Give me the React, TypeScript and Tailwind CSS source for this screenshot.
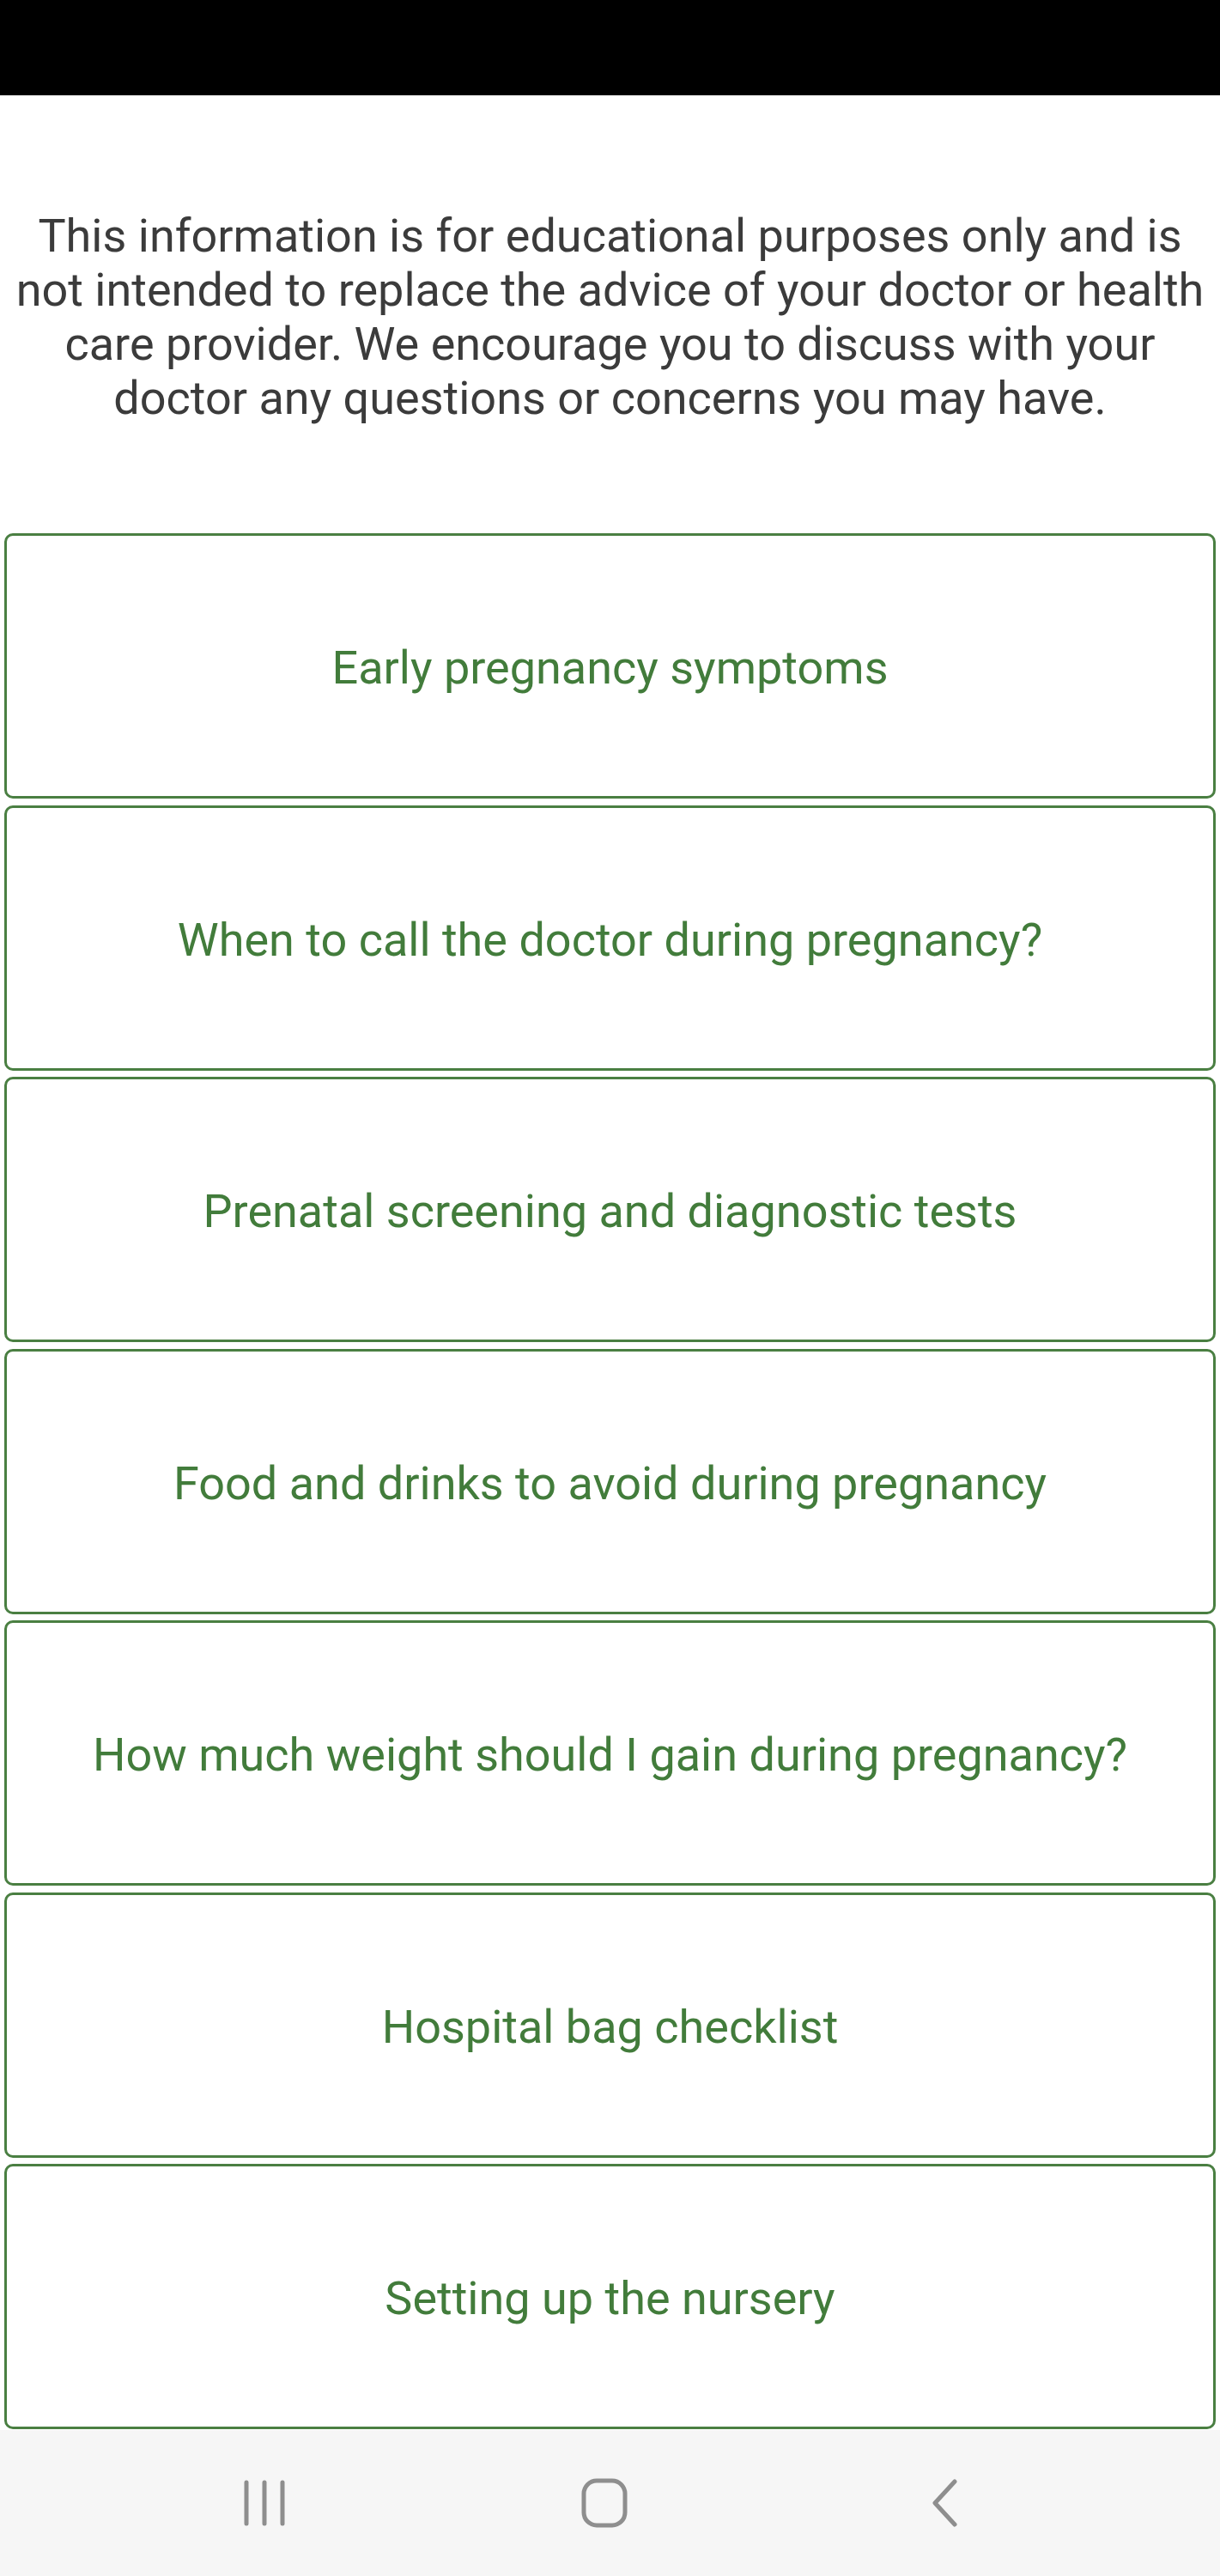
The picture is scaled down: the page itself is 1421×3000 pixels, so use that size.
import { FC } from "react";

const topics = [
  "Early pregnancy symptoms",
  "When to call the doctor during pregnancy?",
  "Prenatal screening and diagnostic tests",
  "Food and drinks to avoid during pregnancy",
  "How much weight should I gain during pregnancy?",
  "Hospital bag checklist",
  "Setting up the nursery",
];

const TopicCard: FC<{ title: string }> = ({ title }) => {
  return (
    <button className="flex h-[309px] w-full items-center justify-center rounded-[10px] border-[3px] border-[#4a7f42] bg-white">
      <span className="pt-[4px] text-[54px] text-[#427c3b]">{title}</span>
    </button>
  );
};

const NavBar: FC = () => {
  return (
    <div className="flex h-[170px] items-center bg-[#f6f6f6] pl-[110px]">
      {/* recent apps */}
      <div className="flex w-[396px] justify-center">
        <svg width="50" height="54" viewBox="0 0 50 54" className="text-[#8e8e8e]">
          <line x1="4" y1="3" x2="4" y2="51" stroke="currentColor" strokeWidth="5" strokeLinecap="round" />
          <line x1="25" y1="3" x2="25" y2="51" stroke="currentColor" strokeWidth="5" strokeLinecap="round" />
          <line x1="46" y1="3" x2="46" y2="51" stroke="currentColor" strokeWidth="5" strokeLinecap="round" />
        </svg>
      </div>
      {/* home */}
      <div className="flex w-[396px] justify-center">
        <svg width="54" height="58" viewBox="0 0 54 58" className="text-[#8e8e8e]">
          <rect x="3" y="3" width="48" height="52" rx="15" fill="none" stroke="currentColor" strokeWidth="5" />
        </svg>
      </div>
      {/* back */}
      <div className="flex w-[396px] justify-center">
        <svg width="34" height="56" viewBox="0 0 34 56" className="text-[#8e8e8e]">
          <path d="M29 3 L6 28 L29 53" fill="none" stroke="currentColor" strokeWidth="5" strokeLinecap="round" strokeLinejoin="round" />
        </svg>
      </div>
    </div>
  );
};

const App: FC = () => {
  return (
    <div
      className="flex h-[3000px] w-[1421px] flex-col bg-white"
      style={{ fontFamily: "Roboto, 'Noto Sans', sans-serif" }}
    >
      <div className="h-[111px] bg-black"></div>

      <p className="mx-auto mt-[132px] w-[1405px] text-center text-[54px] leading-[63px] text-[#3b3b3b]">
        This information is for educational purposes only and is not intended to replace the advice
        of your doctor or health care provider. We encourage you to discuss with your doctor any
        questions or concerns you may have.
      </p>

      <div className="mt-[126px] flex flex-col gap-[7.5px] px-[5px]">
        {topics.map((t) => (
          <TopicCard key={t} title={t} />
        ))}
      </div>

      <div className="mt-auto">
        <NavBar />
      </div>
    </div>
  );
};

export default App;
